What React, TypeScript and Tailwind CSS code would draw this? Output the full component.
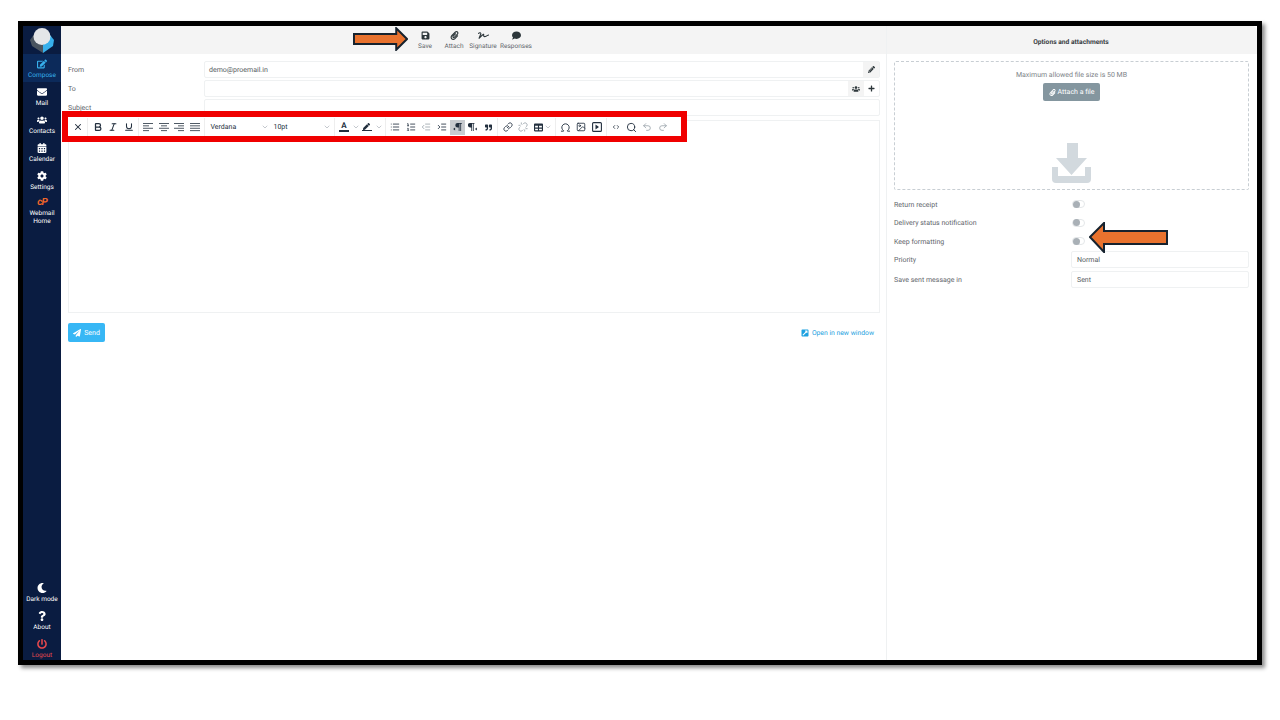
import type { ReactNode } from "react";
import {
  X, Bold, Italic, Underline, ChevronDown, List, ListOrdered, IndentDecrease, IndentIncrease,
  Link, Unlink, Omega, Image, ChevronLeft, ChevronRight, Search, Undo2, Redo2,
} from "lucide-react";
import {
  FaEdit, FaEnvelope, FaUsers, FaCalendarAlt, FaCog, FaMoon, FaQuestion, FaPowerOff, FaSave,
  FaPaperclip, FaSignature, FaComment, FaPencilAlt, FaPlus, FaPaperPlane, FaExternalLinkSquareAlt,
  FaQuoteRight, FaPen, FaTable,
} from "react-icons/fa";

function NavItem({ icon, label, className = "text-white" }: { icon: ReactNode; label: ReactNode; className?: string }) {
  return (
    <div className={`flex flex-col items-center pt-[4px] h-[28px] text-[6.5px] leading-[8px] text-center ${className}`}>
      <div className="h-[11px] flex items-center text-[10px]">{icon}</div>
      <div className="mt-[2px]">{label}</div>
    </div>
  );
}

function Sidebar() {
  return (
    <aside className="w-[38px] shrink-0 bg-[#0a1c41] flex flex-col">
      <div className="h-[28px] flex items-center justify-center">
        <svg width="26" height="26" viewBox="0 0 26 26">
          <path d="M6 6 L1 13 L3 19 L14 26 L14 18 Z" fill="#4a5560" />
          <path d="M21 8 L25 13 L24 19 L14 26 L14 18 Z" fill="#37b0ec" />
          <circle cx="13" cy="9.5" r="8.5" fill="#e4e6e8" />
        </svg>
      </div>
      <NavItem icon={<FaEdit />} label="Compose" className="bg-[#0c2a5a] text-[#37b0ec]" />
      <NavItem icon={<FaEnvelope />} label="Mail" />
      <NavItem icon={<FaUsers />} label="Contacts" />
      <NavItem icon={<FaCalendarAlt />} label="Calendar" />
      <NavItem icon={<FaCog />} label="Settings" />
      <NavItem
        icon={<span className="text-[#f0662a] text-[10px] font-bold italic leading-[9px] tracking-[-1px]">cP</span>}
        label={<span className="block">Webmail<br />Home</span>}
      />
      <div className="mt-auto -mb-[2px]">
        <NavItem icon={<FaMoon />} label="Dark mode" />
        <NavItem icon={<FaQuestion />} label="About" />
        <NavItem icon={<FaPowerOff />} label="Logout" className="text-[#e5484d]" />
      </div>
    </aside>
  );
}

function HeaderAction({ icon, label, width }: { icon: ReactNode; label: string; width: string }) {
  return (
    <div className={`flex flex-col items-center ${width}`}>
      <div className="h-[12px] flex items-center text-[9px] text-[#2c363a]">{icon}</div>
      <div className="pt-[1px] text-[6.5px] leading-[9px] text-[#5f666c] whitespace-nowrap">{label}</div>
    </div>
  );
}

function FormRow({ label, value, children }: { label: string; value?: string; children?: ReactNode }) {
  return (
    <div className="flex items-center h-[17px] mb-[2px]">
      <div className="w-[136px] pt-[1px] text-[7px] text-[#5f666c]">{label}</div>
      <div className="flex-1 h-full flex border border-[#eff1f2] rounded-[2px]">
        <div className="flex-1 px-[4px] pt-[1px] text-[7px] leading-[15px] text-[#555c62]">{value}</div>
        {children}
      </div>
    </div>
  );
}

function Tool({ children, w = "w-[15.5px]", className = "text-[#222f3e]" }: { children: ReactNode; w?: string; className?: string }) {
  return <div className={`h-[15px] flex items-center justify-center ${w} ${className}`}>{children}</div>;
}

function Group({ children, className = "pl-[2px]" }: { children: ReactNode; className?: string }) {
  return <div className={`h-full flex items-center pr-[1px] border-r border-[#eeeeee] ${className}`}>{children}</div>;
}

function AlignIcon({ rows }: { rows: [number, number][] }) {
  return (
    <svg width="10" height="9" viewBox="0 0 10 9" fill="#3c4854">
      {rows.map(([x, w], i) => (
        <rect key={i} x={x} y={i * 2.4} width={w} height="0.9" />
      ))}
    </svg>
  );
}

function PilcrowIcon({ arrow }: { arrow: "left" | "right" }) {
  return (
    <svg width="9" height="8" viewBox="0 0 11 10" fill="#222f3e">
      <g transform={arrow === "left" ? "translate(2 0)" : "translate(-1 0)"}>
        <path d="M3.5 0 H9 V1 H8 V10 H7 V1 H6 V10 H5 V5.5 H3.5 A2.75 2.75 0 0 1 3.5 0 Z" />
      </g>
      {arrow === "left" ? <path d="M0 7.5 L2.5 5.5 V9.5 Z" /> : <path d="M8.5 7.5 L11 5.5 V9.5 Z" />}
    </svg>
  );
}

const ic = { size: 10, strokeWidth: 2 };
const muted = "text-[#9aa3ab]";
const chev = <ChevronDown size={8} strokeWidth={1.5} className="text-[#8a939c]" />;

function EditorToolbar() {
  return (
    <div className="absolute left-[39px] top-[85px] w-[625px] h-[31px] border-[6px] border-[#f00000] bg-white flex items-center pt-[1px] z-10">
      <Group><Tool w="w-[16px]"><X size={10} strokeWidth={2.5} /></Tool></Group>
      <Group>
        <Tool><Bold size={10} strokeWidth={3} /></Tool>
        <Tool><Italic size={10} strokeWidth={2.5} /></Tool>
        <Tool><Underline size={10} strokeWidth={2.5} /></Tool>
      </Group>
      <Group>
        <Tool><AlignIcon rows={[[0, 10], [0, 6], [0, 10], [0, 6]]} /></Tool>
        <Tool><AlignIcon rows={[[0, 10], [2, 6], [0, 10], [2, 6]]} /></Tool>
        <Tool><AlignIcon rows={[[0, 10], [4, 6], [0, 10], [4, 6]]} /></Tool>
        <Tool><AlignIcon rows={[[0, 10], [0, 10], [0, 10], [0, 10]]} /></Tool>
      </Group>
      <Group className="w-[130px] pl-[6px] text-[7px] text-[#222f3e]">
        <span className="w-[50px]">Verdana</span>
        <span className="w-[13px]">{chev}</span>
        <span className="w-[49px]">10pt</span>
        {chev}
      </Group>
      <Group className="w-[51px] pl-[2px]">
        <div className="w-[15px] flex flex-col items-center">
          <span className="text-[8px] leading-[8px] font-bold text-[#222f3e]">A</span>
          <span className="w-[10px] h-[1.5px] bg-[#222f3e]" />
        </div>
        <span className="w-[9px] flex justify-center">{chev}</span>
        <div className="w-[14px] flex flex-col items-center">
          <FaPen className="text-[7px] text-[#222f3e]" />
          <span className="w-[10px] h-[1.5px] bg-[#222f3e]" />
        </div>
        <span className="w-[10px] flex justify-center">{chev}</span>
      </Group>
      <Group>
        <Tool><List {...ic} /></Tool>
        <Tool><ListOrdered {...ic} /></Tool>
        <Tool className={muted}><IndentDecrease {...ic} /></Tool>
        <Tool><IndentIncrease {...ic} /></Tool>
        <Tool className="bg-[#c8cbcf]"><PilcrowIcon arrow="left" /></Tool>
        <Tool><PilcrowIcon arrow="right" /></Tool>
        <Tool><FaQuoteRight className="text-[7px]" /></Tool>
      </Group>
      <Group>
        <Tool><Link {...ic} /></Tool>
        <Tool className={muted}><Unlink {...ic} /></Tool>
        <Tool w="w-[23px] gap-[1px]"><FaTable className="text-[9px]" />{chev}</Tool>
      </Group>
      <Group>
        <Tool><Omega size={11} strokeWidth={2} /></Tool>
        <Tool><Image {...ic} /></Tool>
        <Tool>
          <svg width="10" height="10" viewBox="0 0 10 10">
            <rect x="0.6" y="0.6" width="8.8" height="8.8" rx="1" fill="none" stroke="#222f3e" strokeWidth="1.1" />
            <path d="M3.5 2.5 L7 5 L3.5 7.5 Z" fill="#222f3e" />
          </svg>
        </Tool>
      </Group>
      <div className="flex items-center pl-[2px]">
        <Tool>
          <ChevronLeft size={6} strokeWidth={3} className="-mr-[1px]" />
          <ChevronRight size={6} strokeWidth={3} className="-ml-[1px]" />
        </Tool>
        <Tool><Search size={11} strokeWidth={2} /></Tool>
        <Tool className={muted}><Undo2 {...ic} /></Tool>
        <Tool className={muted}><Redo2 {...ic} /></Tool>
      </div>
    </div>
  );
}

function Compose() {
  return (
    <section className="w-[826px] shrink-0 flex flex-col border-r border-[#eff1f2]">
      <div className="h-[28px] bg-[#f4f4f4] flex items-center justify-center pr-[2px] gap-[1px]">
        <HeaderAction icon={<FaSave />} label="Save" width="w-[28px]" />
        <HeaderAction icon={<FaPaperclip />} label="Attach" width="w-[28px]" />
        <HeaderAction icon={<FaSignature className="text-[11px]" />} label="Signature" width="w-[28px]" />
        <HeaderAction icon={<FaComment />} label="Responses" width="w-[36px]" />
      </div>
      <div className="pl-[7px] pr-[6px] pt-[7px] flex-1">
        <FormRow label="From" value="demo@proemail.in">
          <div className="w-[16px] bg-[#f4f4f4] flex items-center justify-center text-[7px] text-[#2c363a]"><FaPencilAlt /></div>
        </FormRow>
        <FormRow label="To">
          <div className="w-[16px] bg-[#f4f4f4] flex items-center justify-center text-[8px] text-[#2c363a]"><FaUsers /></div>
          <div className="w-[15px] flex items-center justify-center text-[7px] text-[#2c363a]"><FaPlus /></div>
        </FormRow>
        <FormRow label="Subject" />
        <div className="h-[193px] mt-[4px] border border-[#eff1f2]" />
        <div className="flex items-center justify-between mt-[10px] pr-[6px]">
          <div className="w-[37px] h-[19px] pt-[1px] rounded-[2px] bg-[#37b7f5] flex items-center justify-center gap-[3px] text-white text-[7px]">
            <FaPaperPlane className="text-[8px]" />
            Send
          </div>
          <div className="flex items-center gap-[3px] pt-[1px] text-[6.8px] text-[#1ea1e0]">
            <FaExternalLinkSquareAlt className="text-[8px]" />
            Open in new window
          </div>
        </div>
      </div>
    </section>
  );
}

function OptionRow({ label, children }: { label: string; children: ReactNode }) {
  return (
    <div className="grid grid-cols-[177px_1fr] items-center text-[7px] text-[#5f666c] h-[18.5px]">
      <div className="pt-[1px]">{label}</div>
      <div>{children}</div>
    </div>
  );
}

function Toggle() {
  return (
    <div className="ml-[1px] w-[13px] h-[8px] rounded-full border border-[#e4e7e9] bg-white flex items-center">
      <span className="w-[7px] h-[7px] rounded-full bg-[#a9b0b6]" />
    </div>
  );
}

function Field({ value }: { value: string }) {
  return (
    <div className="h-[17px] border border-[#eff1f2] rounded-[2px] px-[5px] pt-[1px] text-[7px] leading-[15px] text-[#555c62]">{value}</div>
  );
}

function Options() {
  return (
    <section className="flex-1 flex flex-col">
      <div className="h-[28px] bg-[#f4f4f4] rounded-tr-[5px] flex items-center justify-center pt-[4px] pr-[2px] text-[6.7px] font-bold text-[#3a3f44]">
        Options and attachments
      </div>
      <div className="pl-[7px] pr-[8px] pt-[7px]">
        <div className="h-[129px] border border-dashed border-[#c8ced3] rounded-[2px] flex flex-col items-center pt-[9px]">
          <div className="text-[7px] leading-[9px] text-[#7d8388]">Maximum allowed file size is 50 MB</div>
          <div className="mt-[3px] w-[57px] h-[18px] rounded-[2px] bg-[#84969f] flex items-center justify-center gap-[2px] text-[7px] text-white">
            <FaPaperclip className="text-[7px]" />
            Attach a file
          </div>
          <svg className="mt-[42px]" width="40" height="40" viewBox="0 0 40 40" fill="#d2d9de">
            <path d="M15 0 H26 V15 H35 L19.5 32 L4 15 H15 Z" />
            <path d="M0 24 H6 V33 H33 V24 H39 V36 A4 4 0 0 1 35 40 H4 A4 4 0 0 1 0 36 Z" />
          </svg>
        </div>
        <div className="mt-[5px]">
          <OptionRow label="Return receipt"><Toggle /></OptionRow>
          <OptionRow label="Delivery status notification"><Toggle /></OptionRow>
          <OptionRow label="Keep formatting"><Toggle /></OptionRow>
          <OptionRow label="Priority"><Field value="Normal" /></OptionRow>
          <div className="mt-[1px]">
            <OptionRow label="Save sent message in"><Field value="Sent" /></OptionRow>
          </div>
        </div>
      </div>
    </section>
  );
}

function Arrow({ className, viewBox, points }: { className: string; viewBox: string; points: string }) {
  return (
    <svg className={`absolute z-20 ${className}`} viewBox={viewBox}>
      <polygon points={points} fill="#e8722e" stroke="#16222e" strokeWidth="2" />
    </svg>
  );
}

export default function App() {
  return (
    <div className="w-[1280px] h-[720px] bg-white pt-[21px] pl-[18px] overflow-hidden font-['Roboto',sans-serif] [text-rendering:geometricPrecision]">
      <div className="relative w-[1244px] h-[644px] border-[5px] border-black shadow-[3px_3px_4px_rgba(0,0,0,0.45)] flex bg-white">
        <Sidebar />
        <Compose />
        <Options />
        <EditorToolbar />
        <Arrow className="left-[330px] top-[1px] w-[55px] h-[24px]" viewBox="0 0 56 24" points="1,7 44,7 44,1 55,12 44,23 44,17 1,17" />
        <Arrow className="left-[1066px] top-[196px] w-[79px] h-[31px]" viewBox="0 0 79 31" points="1,15 15,1 15,9 78,9 78,22 15,22 15,30" />
      </div>
    </div>
  );
}
